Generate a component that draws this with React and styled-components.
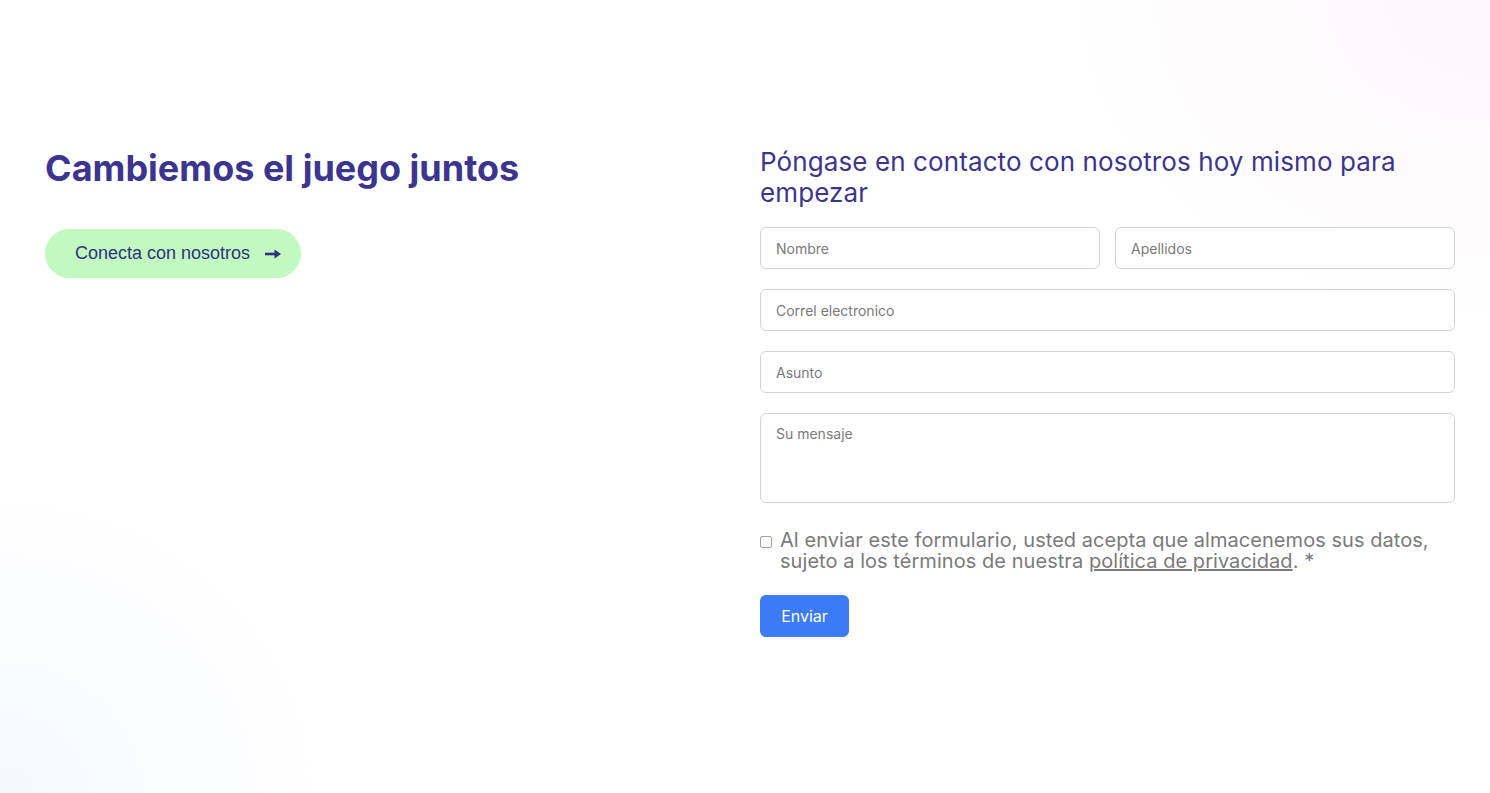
import React from 'react';
import styled, { createGlobalStyle } from 'styled-components';

const GlobalStyle = createGlobalStyle`
  html, body {
    margin: 0;
    padding: 0;
  }
  body {
    font-family: Inter, "Liberation Sans", sans-serif;
    background: #fff;
  }
  * { box-sizing: border-box; }
`;

const Page = styled.div`
  min-height: 793px;
  background:
    radial-gradient(ellipse 420px 320px at 100% 0%, rgba(252, 243, 249, 0.8), rgba(255, 255, 255, 0) 100%),
    radial-gradient(ellipse 320px 300px at 0% 100%, rgba(243, 246, 255, 0.8), rgba(255, 255, 255, 0) 100%),
    #fff;
  padding: 146px 35px 0 45px;
`;

const Columns = styled.div`
  display: grid;
  grid-template-columns: 1fr 1fr;
  gap: 20px;
`;

const Left = styled.div`
  display: flex;
  flex-direction: column;
  align-items: flex-start;
`;

const BigTitle = styled.h1`
  margin: 0;
  font-size: 36px;
  font-weight: 700;
  line-height: 44px;
  color: #3b3590;
`;

const PillButton = styled.a`
  margin-top: 39px;
  display: inline-flex;
  align-items: center;
  gap: 15px;
  height: 49px;
  padding: 0 20px 0 30px;
  border-radius: 25px;
  background: #c2f9c0;
  color: #2e3180;
  font-family: "Liberation Sans", Arial, sans-serif;
  font-size: 18px;
  text-decoration: none;
  cursor: pointer;
`;

const Right = styled.div`
  display: flex;
  flex-direction: column;
`;

const FormTitle = styled.h2`
  margin: 0 0 19px;
  font-size: 26px;
  font-weight: 400;
  line-height: 31px;
  color: #3b3590;
  letter-spacing: 0.1px;
`;

const Form = styled.form`
  display: flex;
  flex-direction: column;
  gap: 20px;
`;

const Row = styled.div`
  display: flex;
  gap: 15px;
  & > * { flex: 1; }
`;

const Field = styled.input`
  display: block;
  width: 100%;
  min-width: 0;
  height: 42px;
  padding: 0 15px;
  border: 1px solid #d2d2d6;
  border-radius: 6px;
  background: #fff;
  font-family: Inter, "Liberation Sans", sans-serif;
  font-size: 14px;
  color: #333;
  outline: none;
  &::placeholder { color: #7a7a7a; }
`;

const Message = styled.textarea`
  display: block;
  width: 100%;
  height: 90px;
  padding: 11px 15px;
  border: 1px solid #d2d2d6;
  border-radius: 6px;
  background: #fff;
  font-family: Inter, "Liberation Sans", sans-serif;
  font-size: 14px;
  resize: none;
  outline: none;
  &::placeholder { color: #7a7a7a; }
`;

const Consent = styled.label`
  margin-top: 7px;
  display: flex;
  align-items: flex-start;
  gap: 8px;
  font-size: 20px;
  line-height: 21px;
  color: #7a7a7a;
  letter-spacing: 0.05px;
`;

const Check = styled.input`
  margin: 6px 0 0;
  width: 12px;
  height: 12px;
  flex: none;
  appearance: none;
  border: 1px solid #a0a0a0;
  border-radius: 2px;
  background: #fff;
`;

const PolicyLink = styled.a`
  color: #7a7a7a;
  text-decoration: underline;
`;

const Submit = styled.button`
  margin-top: 3px;
  align-self: flex-start;
  width: 89px;
  height: 42px;
  border: none;
  border-radius: 6px;
  background: #3b7bf5;
  color: #fff;
  font-family: Inter, "Liberation Sans", sans-serif;
  font-size: 16px;
  cursor: pointer;
`;

const Arrow = () => (
  <svg width="16" height="10" viewBox="0 0 16 10">
    <rect x="0" y="3.7" width="10" height="2.6" fill="#2e3180" />
    <path d="M9.5 0.5 L16 5 L9.5 9.5 Z" fill="#2e3180" />
  </svg>
);

export default function App() {
  return (
    <>
      <GlobalStyle />
      <Page>
        <Columns>
          <Left>
            <BigTitle>Cambiemos el juego juntos</BigTitle>
            <PillButton>
              Conecta con nosotros
              <Arrow />
            </PillButton>
          </Left>
          <Right>
            <FormTitle>Póngase en contacto con nosotros hoy mismo para empezar</FormTitle>
            <Form onSubmit={e => e.preventDefault()}>
              <Row>
                <Field placeholder="Nombre" />
                <Field placeholder="Apellidos" />
              </Row>
              <Field placeholder="Correl electronico" />
              <Field placeholder="Asunto" />
              <Message placeholder="Su mensaje" />
              <Consent>
                <Check type="checkbox" />
                <span>
                  Al enviar este formulario, usted acepta que almacenemos sus datos, sujeto a los términos de nuestra{' '}
                  <PolicyLink href="#">política de privacidad</PolicyLink>. *
                </span>
              </Consent>
              <Submit type="submit">Enviar</Submit>
            </Form>
          </Right>
        </Columns>
      </Page>
    </>
  );
}
